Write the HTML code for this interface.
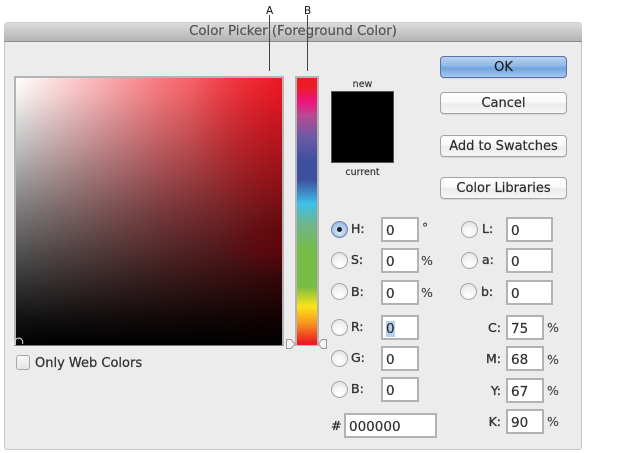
<!DOCTYPE html>
<html>
<head>
<meta charset="utf-8">
<style>
html,body{margin:0;padding:0;background:#fff;}
body{width:622px;height:453px;position:relative;overflow:hidden;font-family:"DejaVu Sans","Liberation Sans",sans-serif;color:#333;}
div{position:absolute;box-sizing:border-box;}
.t{white-space:nowrap;line-height:16px;filter:blur(.25px);}
.dlg{left:4px;top:22px;width:578px;height:428px;background:#ececec;border:1px solid #c6c6c6;border-top:0;border-radius:4px 4px 3px 3px;}
.bar{left:4px;top:22px;width:578px;height:20px;background:linear-gradient(#dcdcdc,#b4b4b4);border-top:1px solid #cfcfcf;border-bottom:1px solid #8c8c8c;border-radius:4px 4px 0 0;}
.btn{left:440px;width:127px;height:22px;border:1px solid #a4a4a4;border-radius:4px;background:linear-gradient(#fff 0,#f8f8f8 45%,#ececec 55%,#f6f6f6 100%);text-align:center;font-size:13px;line-height:21px;color:#2b2b2b;-webkit-text-stroke:.2px #2b2b2b;white-space:nowrap;box-shadow:0 1px 0 #d8d8d8;}
.in{background:#fff;border:2px solid #b2b2b2;font-size:13.5px;line-height:25px;padding-left:3px;color:#2f2f2f;-webkit-text-stroke:.2px #2f2f2f;filter:blur(.2px);}
.w37{width:38px;height:25px;}
.w47{width:47px;height:25px;}
.r{width:17px;height:17px;border-radius:50%;border:1px solid #a8a8a8;background:radial-gradient(circle at 50% 75%,#fff 0,#f4f4f4 45%,#dcdcdc 100%);}
.lb{font-size:12.5px;color:#333;-webkit-text-stroke:.35px #333;}
.pc{font-size:12.5px;color:#444;-webkit-text-stroke:.15px #444;}
</style>
</head>
<body>
<div class="dlg"></div>
<div class="bar"></div>
<div class="t" style="left:4px;top:23px;width:578px;text-align:center;font-size:13.3px;line-height:18px;color:#555;-webkit-text-stroke:.2px #555;">Color Picker (Foreground Color)</div>

<div class="t" style="left:266px;top:3px;font-size:10.5px;color:#111;">A</div>
<div class="t" style="left:304px;top:3px;font-size:10.5px;color:#111;">B</div>
<div style="left:269px;top:15px;width:1px;height:56px;background:#444;"></div>
<div style="left:307px;top:15px;width:1px;height:56px;background:#444;"></div>

<!-- colour field -->
<div style="left:14px;top:76px;width:270px;height:270px;border:2px solid #b4b4b4;border-bottom:1px solid #777;background:radial-gradient(ellipse 26% 12% at 100% 62%,rgba(110,0,8,.5),rgba(110,0,8,0)),linear-gradient(rgba(0,0,0,0) 0,rgba(0,0,0,.04) 6%,rgba(0,0,0,.24) 25%,rgba(0,0,0,.52) 50%,rgba(0,0,0,.78) 75%,rgba(0,0,0,.93) 90%,#000 100%),radial-gradient(ellipse 35% 45% at 100% 15%,rgba(235,20,35,.6),rgba(235,20,35,0)),linear-gradient(90deg,#fff,#f8777c 55%,#ed1c24);"></div>
<svg style="position:absolute;left:12px;top:335px" width="14" height="14"><path d="M3 10V6.500A4 4 0 0 1 7 3A4.500 4.500 0 0 1 10.500 9" fill="none" stroke="#ddd" stroke-width="1"/></svg>

<!-- hue -->
<div style="left:295px;top:76px;width:24px;height:270px;border:2px solid #b4b4b4;border-bottom:1px solid #bbb;background:linear-gradient(#ed1c24 0,#ed1c24 3%,#ec1380 9%,#b94a90 14%,#6c5aa5 22%,#3e4f9f 31%,#3e4f9f 38%,#3fa4d8 45%,#3fc0ea 47%,#6fb58a 55%,#77bc44 65%,#77bc44 78%,#fbe41a 85.500%,#f7941d 92%,#ed1c24 99%);"></div>
<svg style="position:absolute;left:284px;top:337px" width="46" height="14"><path d="M2.500 2.500H7L11 7L7 11.500H2.500Z" fill="#f4f4f4" stroke="#999"/><path d="M42.500 2.500H38L34.500 7L38 11.500H42.500Z" fill="#f4f4f4" stroke="#999"/></svg>

<!-- swatch -->
<div class="t" style="left:331px;top:77px;width:63px;text-align:center;font-size:9.500px;color:#333;-webkit-text-stroke:.15px #333;">new</div>
<div style="left:331px;top:91px;width:63px;height:72px;background:#000;border:1px solid #555;"></div>
<div class="t" style="left:331px;top:165px;width:63px;text-align:center;font-size:9.500px;color:#333;-webkit-text-stroke:.15px #333;">current</div>

<!-- buttons -->
<div class="btn" style="top:56px;border-color:#5f6fa8;background:linear-gradient(#b9d3f0 0,#8fb7e6 45%,#6fa2dc 55%,#a4c8ef 100%);color:#1c1c1c;">OK</div>
<div class="btn" style="top:92px;">Cancel</div>
<div class="btn" style="top:135px;">Add to Swatches</div>
<div class="btn" style="top:177px;">Color Libraries</div>

<!-- HSB / RGB -->
<div class="r" style="left:331px;top:221px;border-color:#6d86b0;background:radial-gradient(circle at 50% 70%,#d5e7fa,#8fb3df);box-shadow:0 0 0 1px #a7bcd8 inset;"></div>
<div style="left:337px;top:227px;width:5px;height:5px;border-radius:50%;background:#1a2230;"></div>
<div class="r" style="left:331px;top:252px;"></div>
<div class="r" style="left:331px;top:283px;"></div>
<div class="r" style="left:331px;top:319px;"></div>
<div class="r" style="left:331px;top:350px;"></div>
<div class="r" style="left:331px;top:381px;"></div>

<div class="t lb" style="left:351px;top:221px;">H:</div>
<div class="t lb" style="left:351px;top:252px;">S:</div>
<div class="t lb" style="left:351px;top:284px;">B:</div>
<div class="t lb" style="left:351px;top:319px;">R:</div>
<div class="t lb" style="left:351px;top:350px;">G:</div>
<div class="t lb" style="left:351px;top:381px;">B:</div>

<div class="in w37" style="left:381px;top:217px;">0</div>
<div class="in w37" style="left:381px;top:248px;">0</div>
<div class="in w37" style="left:381px;top:280px;">0</div>
<div class="in w37" style="left:381px;top:315px;"><span style="background:#b4d2f0;">0</span></div>
<div class="in w37" style="left:381px;top:346px;">0</div>
<div class="in w37" style="left:381px;top:377px;">0</div>

<div class="t pc" style="left:422px;top:220px;">°</div>
<div class="t pc" style="left:421px;top:253px;">%</div>
<div class="t pc" style="left:421px;top:285px;">%</div>

<div class="t lb" style="left:331px;top:418px;">#</div>
<div class="in" style="left:344px;top:413px;width:93px;height:25px;">000000</div>

<!-- Lab -->
<div class="r" style="left:461px;top:221px;"></div>
<div class="r" style="left:461px;top:252px;"></div>
<div class="r" style="left:460px;top:283px;"></div>
<div class="t lb" style="left:482px;top:221px;">L:</div>
<div class="t lb" style="left:482px;top:252px;">a:</div>
<div class="t lb" style="left:481px;top:284px;">b:</div>
<div class="in w47" style="left:506px;top:217px;">0</div>
<div class="in w47" style="left:506px;top:248px;">0</div>
<div class="in w47" style="left:506px;top:280px;">0</div>

<!-- CMYK -->
<div class="t lb" style="left:480px;top:320px;width:21px;text-align:right;">C:</div>
<div class="t lb" style="left:480px;top:351px;width:21px;text-align:right;">M:</div>
<div class="t lb" style="left:480px;top:383px;width:21px;text-align:right;">Y:</div>
<div class="t lb" style="left:480px;top:414px;width:21px;text-align:right;">K:</div>
<div class="in w37" style="left:506px;top:315px;">75</div>
<div class="in w37" style="left:506px;top:346px;">68</div>
<div class="in w37" style="left:506px;top:378px;">67</div>
<div class="in w37" style="left:506px;top:409px;">90</div>
<div class="t pc" style="left:547px;top:320px;">%</div>
<div class="t pc" style="left:547px;top:352px;">%</div>
<div class="t pc" style="left:547px;top:383px;">%</div>
<div class="t pc" style="left:547px;top:414px;">%</div>

<!-- checkbox -->
<div style="left:16px;top:355px;width:14px;height:15px;border:1px solid #a8a8a8;border-radius:3px;background:linear-gradient(#fafafa,#e4e4e4);"></div>
<div class="t" style="left:35px;top:356px;font-size:13px;color:#333;-webkit-text-stroke:.25px #333;">Only Web Colors</div>
</body>
</html>
